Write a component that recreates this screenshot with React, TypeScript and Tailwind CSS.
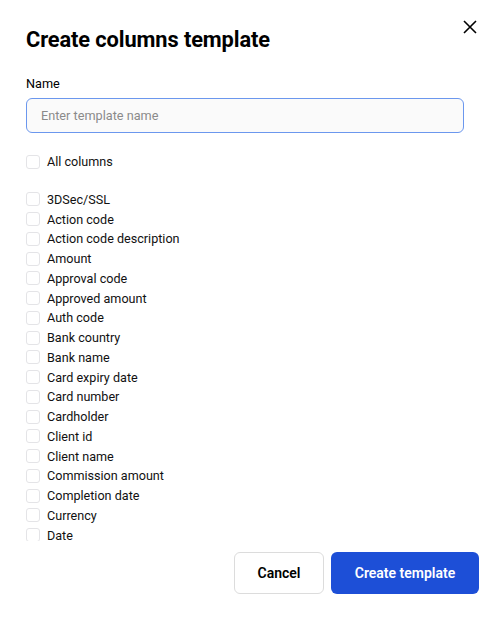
import React, { useState } from 'react';

const columns = [
    '3DSec/SSL',
    'Action code',
    'Action code description',
    'Amount',
    'Approval code',
    'Approved amount',
    'Auth code',
    'Bank country',
    'Bank name',
    'Card expiry date',
    'Card number',
    'Cardholder',
    'Client id',
    'Client name',
    'Commission amount',
    'Completion date',
    'Currency',
    'Date',
    'Description',
    'Email',
];

const Checkbox: React.FC<{ checked: boolean; onChange: () => void }> = ({ checked, onChange }) => (
    <button
        type="button"
        onClick={onChange}
        className={`w-[14px] h-[14px] shrink-0 rounded-[3px] border ${checked ? 'bg-[#1d4fd7] border-[#1d4fd7]' : 'bg-white border-[#e4e4e7]'}`}
    />
);

export default function App() {
    const [name, setName] = useState('');
    const [selected, setSelected] = useState<string[]>([]);

    const toggle = (c: string) =>
        setSelected((s) => (s.includes(c) ? s.filter((x) => x !== c) : [...s, c]));

    const allChecked = selected.length === columns.length;

    return (
        <div className="w-[492px] h-[618px] bg-white flex flex-col font-['Roboto',sans-serif] text-[#111]">
            {/* Header */}
            <div className="flex items-start justify-between pl-[26px] pr-[13px] pt-[25px]">
                <h2 className="text-[21.8px] leading-[30px] font-bold text-black tracking-[-0.1px]">Create columns template</h2>
                <button className="mt-[-7px] text-black" title="Close">
                    <svg width="18" height="18" viewBox="0 0 18 18" fill="none" stroke="currentColor" strokeWidth="1.6">
                        <path d="M3 3 L15 15 M15 3 L3 15" />
                    </svg>
                </button>
            </div>

            {/* Name */}
            <div className="pl-[26px] pr-[28px] mt-[20px]">
                <label className="block text-[12.7px] leading-[18px] text-black">Name</label>
                <input
                    value={name}
                    onChange={(e) => setName(e.target.value)}
                    placeholder="Enter template name"
                    className="mt-[5px] w-full h-[35px] rounded-[6px] border border-[#6b97ee] bg-[#fafafa] px-[14px] text-[12.7px] placeholder:text-[#8a8a8a] outline-none"
                />
            </div>

            {/* All columns */}
            <div className="pl-[26px] mt-[19px] flex items-center gap-[7px] h-[20px]">
                <Checkbox
                    checked={allChecked}
                    onChange={() => setSelected(allChecked ? [] : [...columns])}
                />
                <span className="text-[12.6px] leading-[20px]">All columns</span>
            </div>

            {/* Column list */}
            <div className="pl-[26px] mt-[17.5px] h-[351.5px] overflow-hidden">
                {columns.map((c) => (
                    <div key={c} className="flex items-center gap-[7px] h-[19.75px]">
                        <Checkbox checked={selected.includes(c)} onChange={() => toggle(c)} />
                        <span className="text-[12.6px] leading-[19px]">{c}</span>
                    </div>
                ))}
            </div>

            {/* Footer */}
            <div className="flex justify-end gap-[7px] pr-[13px] mt-[11px]">
                <button className="w-[90px] h-[42px] rounded-[6px] border border-[#dcdcdc] bg-white text-[14px] font-semibold text-black">
                    Cancel
                </button>
                <button className="w-[148px] h-[42px] rounded-[6px] bg-[#1d4fd7] text-[14px] font-semibold text-white">
                    Create template
                </button>
            </div>
        </div>
    );
}
